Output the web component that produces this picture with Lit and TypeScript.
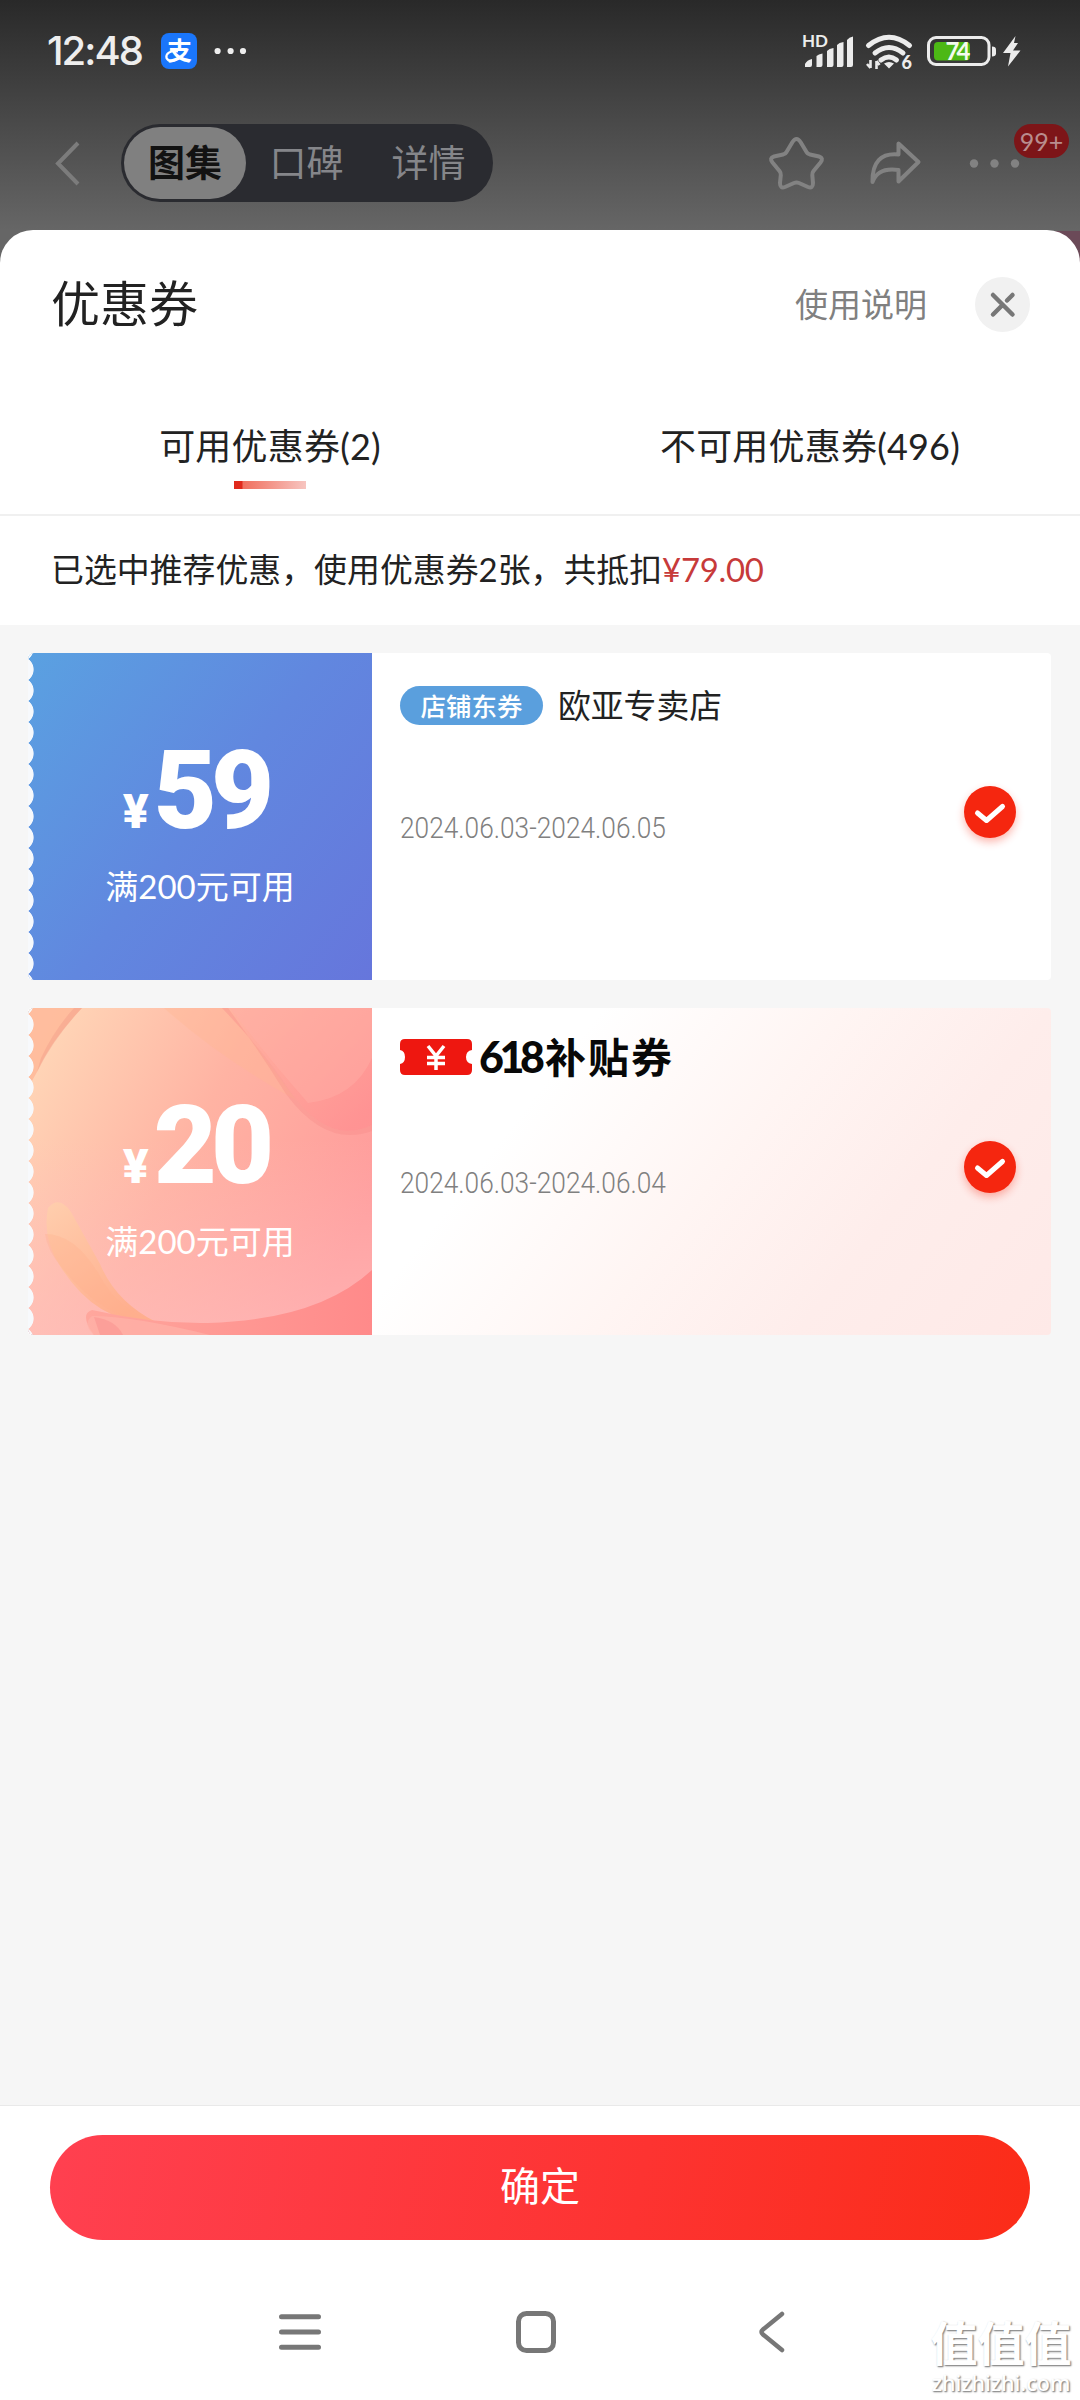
import { LitElement, html, css, svg, nothing } from "lit";
import { customElement, property } from "lit/decorators.js";

interface Coupon {
  kind: "shop" | "subsidy";
  amount: string;
  rule: string;
  tag?: string;
  name: string;
  period: string;
}

const COUPONS: Coupon[] = [
  { kind: "shop", amount: "59", rule: "满200元可用", tag: "店铺东券", name: "欧亚专卖店", period: "2024.06.03-2024.06.05" },
  { kind: "subsidy", amount: "20", rule: "满200元可用", name: "补贴券", period: "2024.06.03-2024.06.04" },
];

@customElement("status-bar")
class StatusBar extends LitElement {
  static styles = css`
    :host { display: flex; height: 102px; align-items: center; padding: 0 56px 0 47px; color: #eee; }
    .clock { font: 500 40px/50px Inter, sans-serif; letter-spacing: -2px; width: 114px; }
    .pay { width: 36px; height: 36px; border-radius: 8px; background: #1a76fb; margin-right: 17px; }
    .pay svg, .dots, .signals { display: block; overflow: visible; }
    .signals { margin-left: auto; }
  `;
  render() {
    return html`
      <span class="clock">12:48</span>
      <span class="pay">
        <svg width="36" height="36" viewBox="0 0 36 36">
          <text x="18.500" y="26.500" font-size="25" font-weight="700" text-anchor="middle" fill="#fff" font-family="Noto Sans CJK SC, sans-serif">支</text>
          <path d="M17 18.500C9 17 4.500 21 5.500 25c2.500 5 9 3 13-1" fill="none" stroke="#fff" stroke-width="2.200" />
        </svg>
      </span>
      <svg class="dots" width="34" height="10" viewBox="0 0 34 10" fill="#eee">
        <circle cx="3.6" cy="5" r="3.1" /><circle cx="16.6" cy="5" r="3.1" /><circle cx="29" cy="5" r="3.1" />
      </svg>
      <svg class="signals" width="226" height="40" viewBox="798 31 226 40" fill="#ececec">
        <text x="802" y="47" font-size="17" font-weight="700" font-family="Lato, sans-serif">HD</text>
        <path d="M805 67v-3q2-4 7-5v6q0 2-2 2zM816.500 67V56q2-2 6-2.500V65q0 2-2 2zM827 67V51q2-2.500 6.500-3V65q0 2-2 2zM837 67V45q2-2.500 6.500-3V65q0 2-2 2zM847 67V40q2-3 6-3.500V65q0 2-2 2z" />
        <g fill="none" stroke="#ececec" stroke-width="5" stroke-linecap="round">
          <path d="M868.500 45.500Q889 29 909.500 45.500" />
          <path d="M875 53Q889 42 903 53" />
          <path d="M881 60Q889 54 896.500 60" />
        </g>
        <path d="M884 63.500q5-3 10 0l-5 5z" />
        <path d="M870.500 60v8m0 0l-3.500-4M876.500 69v-8m0 0l3 4" fill="none" stroke="#ececec" stroke-width="2.600" />
        <text x="901.500" y="69" font-size="18" font-weight="900" font-family="Lato, sans-serif">6</text>
        <rect x="928.500" y="37.500" width="60.500" height="27" rx="7.500" fill="none" stroke="#ececec" stroke-width="3" />
        <rect x="934" y="42" width="36" height="18.500" rx="4" fill="#4cb815" />
        <path d="M992 46.500q4 0 4 3v4q0 3-4 3z" />
        <text x="945.500" y="60" font-size="24" font-weight="700" textLength="25" fill="#f3fbee" font-family="Lato, sans-serif">74</text>
        <path d="M1015.500 36L1003 53h7.500L1008 66.500 1020.500 50.500H1013l5-7.500h-4z" />
      </svg>
    `;
  }
}

@customElement("product-nav")
class ProductNav extends LitElement {
  static styles = css`
    :host { display: flex; height: 122px; align-items: center; padding: 0 11px 0 54px; }
    svg { display: block; flex: none; }
    .back { margin-right: 40px; }
    .pill { display: flex; box-sizing: border-box; width: 372px; height: 78px; border-radius: 39px; background: #2a2b30; padding: 3px; }
    .tab { width: 121px; text-align: center; color: #85868a; font: 400 37px/69px "Noto Sans CJK SC", sans-serif; }
    .active { width: 122px; border-radius: 36px; background: #808080; color: #121212; font-weight: 700; }
    .tab:last-child { width: 123px; }
    .actions { position: relative; margin-left: auto; }
    .badge { position: absolute; right: 0; top: -9px; width: 55px; height: 34px; border-radius: 17px; background: #7d1518; color: #b98d8e; font: 400 25px/34px Lato, sans-serif; text-align: center; }
  `;
  render() {
    return html`
      <svg class="back" width="27" height="48" viewBox="0 0 27 48" fill="none" stroke="#7c7c7c" stroke-width="4"><path d="M24 4L4 24.500 24 45" /></svg>
      <div class="pill">
        <span class="tab active">图集</span><span class="tab">口碑</span><span class="tab">详情</span>
      </div>
      <div class="actions">
        <svg width="303" height="60" viewBox="766 133 303 60" fill="none" stroke="#828282" stroke-width="4" stroke-linejoin="round">
          <path d="M792.500 142Q796.500 136 800.500 142L806.500 152Q807.500 154 810 154.500L819 156.500Q824 158 820.500 162.500L813.500 171Q812 173 812.300 175L813 183Q813 189 808 187L799 183Q796.500 182 794 183L785 187Q780 189 780 183L780.800 175Q781 173 779.500 171L772.500 162.500Q769 158 774 156.500L783 154.500Q785.500 154 786.500 152Z" />
          <path d="M898.500 143.500V154.500Q872 152 872.500 182Q878 167 898.500 170V181.500L918.500 162Z" />
          <g fill="#828282" stroke="none"><circle cx="974" cy="163.500" r="4.200" /><circle cx="994.500" cy="163.500" r="4.200" /><circle cx="1015" cy="163.500" r="4.200" /></g>
        </svg>
        <span class="badge">99+</span>
      </div>
    `;
  }
}

@customElement("coupon-card")
class CouponCard extends LitElement {
  @property({ attribute: false }) coupon!: Coupon;

  static styles = css`
    :host { display: block; }
    .card { display: flex; height: 327px; border-radius: 4px; background: #fff; overflow: hidden; }
    .subsidy { background: linear-gradient(128deg, #fff 45%, #fff5f3 64%, #feedeb 80%, #fee9e7); }
    .value { position: relative; width: 344px; flex: none; color: #fff; text-align: center; border-radius: 6px 0 0 6px; overflow: hidden; background: linear-gradient(128deg, #5aa1e1, #6187df 50%, #6676dc); }
    .value::after { content: ""; position: absolute; left: 0; top: 0; width: 10px; height: 100%; background: radial-gradient(circle at -7.500px 10.500px, #f7f9fc 12.700px, transparent 13.500px) 0 -15px / 10px 21px repeat-y; }
    .art { position: absolute; left: 0; top: 0; }
    .amount { position: relative; display: flex; justify-content: center; align-items: baseline; padding-top: 73px; font: 900 109px/130px Roboto, sans-serif; letter-spacing: -6px; margin-left: -9px; }
    .yen { font-size: 48px; line-height: 60px; margin-right: 5px; letter-spacing: 0; }
    .rule { position: relative; margin-top: 6px; font: 400 33px/48px Lato, "Noto Sans CJK SC", sans-serif; }
    .info { flex: 1; padding: 32px 0 0 28px; }
    .head { display: flex; align-items: center; height: 40px; }
    .tag { box-sizing: border-box; width: 143px; height: 39px; border-radius: 20px; background: #5a9fdd; color: #fff; font: 500 25.500px/37px "Noto Sans CJK SC", sans-serif; text-align: center; margin-right: 15px; }
    .name { font: 400 32.800px/38px "Noto Sans CJK SC", sans-serif; color: #222; margin-top: -2px; }
    .logo { display: flex; align-items: center; height: 36px; margin-top: -6px; font: 700 41px/32px "Noto Sans CJK SC", sans-serif; letter-spacing: 2px; color: #080808; }
    .digits { font: 900 43px/36px Lato, sans-serif; letter-spacing: -4.500px; margin: 0 2px 0 7px; width: 64px; white-space: nowrap; }
    .cn { margin-top: -5px; }
    .period { margin-top: 85px; font: 300 30px/36px Roboto, sans-serif; color: #808080; transform: scaleX(.876); transform-origin: left; white-space: nowrap; width: 300px; }
    .check { width: 52px; height: 52px; margin: 133px 35px 0 0; border-radius: 50%; background: #f5260f; box-shadow: 0 4px 8px #f5260f55; }
    svg { display: block; }
  `;

  private art() {
    return svg`
      <defs>
        <linearGradient id="base" x1="0" y1="0.100" x2="1" y2="0.600"><stop offset="0" stop-color="#ffd8b8" /><stop offset=".5" stop-color="#ffb3a3" /><stop offset="1" stop-color="#ff9b9b" /></linearGradient>
        <linearGradient id="low" x1="0" y1="0" x2="0" y2="1"><stop offset=".4" stop-color="#ffc0c0" stop-opacity="0" /><stop offset="1" stop-color="#ffc0c0" stop-opacity=".6" /></linearGradient>
        <linearGradient id="fold" x1="0" y1="0" x2="1" y2=".8"><stop offset="0" stop-color="#ffb39f" /><stop offset="1" stop-color="#ff8d8f" /></linearGradient>
        <linearGradient id="wave" x1="0" y1="0" x2="1" y2="0"><stop offset="0" stop-color="#ffa79d" /><stop offset="1" stop-color="#ff8a8a" /></linearGradient>
        <linearGradient id="leaf" x1="0" y1="0" x2=".6" y2="1"><stop offset="0" stop-color="#ffd0ad" /><stop offset="1" stop-color="#ffad88" /></linearGradient>
      </defs>
      <rect width="344" height="327" fill="url(#base)" />
      <rect width="344" height="327" fill="url(#low)" />
      <path d="M0 0H54Q22 34 9 64L0 80Z" fill="#ffb797" opacity=".8" />
      <path d="M54 0Q26 30 9 64L13 50Q26 22 46 0Z" fill="#ee9585" opacity=".35" />
      <path d="M136 0Q192 50 268 92L200 0Z" fill="#ffb693" opacity=".35" />
      <path d="M194 0Q240 48 262 83Q300 138 344 117V0Z" fill="url(#fold)" opacity=".7" />
      <path d="M194 0Q240 48 262 83Q300 138 344 117V123Q298 140 258 86Q232 44 200 0Z" fill="#f57f7f" opacity=".25" />
      <path d="M202 0Q240 50 280 95Q326 90 344 50V0Z" fill="#ffb0a6" opacity=".45" />
      <path d="M20 200Q31 187 43 204L72 256Q88 294 128 314Q70 318 32 258Q14 230 20 200Z" fill="url(#leaf)" opacity=".85" />
      <path d="M17 226Q48 226 72 268Q90 302 126 313Q76 313 34 260Q19 242 17 226Z" fill="#ffae8b" opacity=".3" />
      <path d="M344 262Q290 312 180 315Q125 316 64 302Q51 306 66 327H344Z" fill="url(#wave)" />
      <path d="M64 308Q105 308 182 327H66Q54 316 64 308Z" fill="#ffb2a8" opacity=".7" />
      <path d="M66 309Q88 312 95 327H72Z" fill="#f98f8b" opacity=".45" />
    `;
  }

  render() {
    const c = this.coupon;
    const subsidy = c.kind === "subsidy";
    return html`
      <div class="card ${c.kind}">
        <div class="value">
          ${subsidy ? html`<svg class="art" width="344" height="327" viewBox="0 0 344 327">${this.art()}</svg>` : nothing}
          <div class="amount"><span class="yen">¥</span><span>${c.amount}</span></div>
          <div class="rule">${c.rule}</div>
        </div>
        <div class="info">
          <div class="head">
            ${subsidy
              ? html`<span class="logo">
                  <svg width="72" height="36" viewBox="0 0 72 36">
                    <path d="M5 0H67Q72 0 72 5V11Q66 12 66 18T72 25V31Q72 36 67 36H5Q0 36 0 31V25Q5 24 5 18T0 11V5Q0 0 5 0Z" fill="#ee1710" />
                    <path d="M28 7L36 17 44 7M36 17V31M27 18.500H45M27 24.500H45" fill="none" stroke="#fff" stroke-width="3.500" />
                  </svg>
                  <span class="digits">618</span><span class="cn">${c.name}</span></span>`
              : html`<span class="tag">${c.tag}</span><span class="name">${c.name}</span>`}
          </div>
          <div class="period">${c.period}</div>
        </div>
        <div class="check">
          <svg width="52" height="52" viewBox="0 0 52 52" fill="none" stroke="#fff" stroke-width="5" stroke-linecap="round" stroke-linejoin="round"><path d="M13.500 27L22.500 34.500 38.500 20.500" /></svg>
        </div>
      </div>
    `;
  }
}

@customElement("app-root")
class AppRoot extends LitElement {
  static styles = css`
    :host { display: block; position: relative; width: 1080px; height: 2400px; overflow: hidden; background: linear-gradient(#6b4a58, #6b4a58) right 231px / 40px 60px no-repeat, linear-gradient(#292929, #666 230px); }
    .sheet { display: flex; flex-direction: column; height: 2170px; margin-top: 6px; background: #fff; border-radius: 33px 33px 0 0; overflow: hidden; font-family: Lato, "Noto Sans CJK SC", sans-serif; color: #222; }
    .header { display: flex; align-items: center; height: 148px; padding: 0 50px 0 51px; flex: none; }
    .title { font-size: 49px; line-height: 60px; margin-top: -2px; }
    .help { margin-left: auto; margin-right: 48px; font-size: 33px; line-height: 40px; color: #808080; }
    .close { display: block; width: 55px; height: 55px; border-radius: 50%; background: #f1f1f1; }
    .tabs { display: flex; height: 136px; flex: none; border-bottom: 2px solid #f0f0f0; }
    .tab { width: 540px; display: flex; flex-direction: column; align-items: center; padding-top: 44px; box-sizing: border-box; font-size: 36px; line-height: 48px; letter-spacing: .2px; }
    .line { width: 72px; height: 8px; margin-top: 11px; background: linear-gradient(90deg, #e02a1c 8px, #f0705f 9px, #f7c5c0); }
    .note { height: 109px; flex: none; padding-left: 51px; font-size: 32.900px; line-height: 107px; }
    .price { color: #c73a3a; letter-spacing: -.3px; }
    .list { flex: 1; display: flex; flex-direction: column; gap: 28px; padding: 28px 29px 0 28px; background: #f6f6f6; }
    .footer { box-sizing: border-box; height: 295px; flex: none; border-top: 1px solid #e9e9e9; padding: 29px 50px 0; }
    .confirm { height: 105px; border-radius: 53px; background: linear-gradient(100deg, #ff4050, #fd3331 60%, #fb2c18); color: #fff; font-size: 40px; line-height: 103px; text-align: center; }
    .keys { display: block; margin: 68px 0 0 227px; }
    .mark { position: absolute; right: 7px; bottom: 5px; width: 144px; text-align: center; color: #fff; text-shadow: 1px 1px 2px #888, 1px 1px 1px #aaa; }
    .cn { font: 700 47px/56px "Noto Sans CJK SC", sans-serif; }
    .url { margin-top: 2px; font: 500 21.500px/24px "Noto Sans", sans-serif; }
  `;
  render() {
    return html`
      <status-bar></status-bar>
      <product-nav></product-nav>
      <div class="sheet">
        <div class="header">
          <span class="title">优惠券</span>
          <span class="help">使用说明</span>
          <svg class="close" viewBox="0 0 55 55" fill="none" stroke="#777" stroke-width="4.500" stroke-linecap="round"><path d="M18 18L37.500 37.500M18 37.500L27 28.500M32 23.500L37.500 18" /></svg>
        </div>
        <div class="tabs">
          <div class="tab"><span>可用优惠券(2)</span><span class="line"></span></div>
          <div class="tab"><span>不可用优惠券(496)</span></div>
        </div>
        <div class="note">已选中推荐优惠，使用优惠券2张，共抵扣<span class="price">¥79.00</span></div>
        <div class="list">${COUPONS.map((c) => html`<coupon-card .coupon=${c}></coupon-card>`)}</div>
        <div class="footer">
          <div class="confirm">确定</div>
          <svg class="keys" width="520" height="48" viewBox="277 2308 520 48" fill="none" stroke="#777" stroke-width="5">
            <path d="M281.500 2316.700H318.500M281.500 2332H318.500M281.500 2347.300H318.500" stroke-linecap="round" />
            <rect x="518.500" y="2313.500" width="35" height="37" rx="8" />
            <path d="M782 2314L763 2329.500Q760 2332 763 2334.500L782 2350" stroke-width="4.500" stroke-linecap="round" />
          </svg>
        </div>
      </div>
      <div class="mark"><div class="cn">值值值</div><div class="url">zhizhizhi.com</div></div>
    `;
  }
}
